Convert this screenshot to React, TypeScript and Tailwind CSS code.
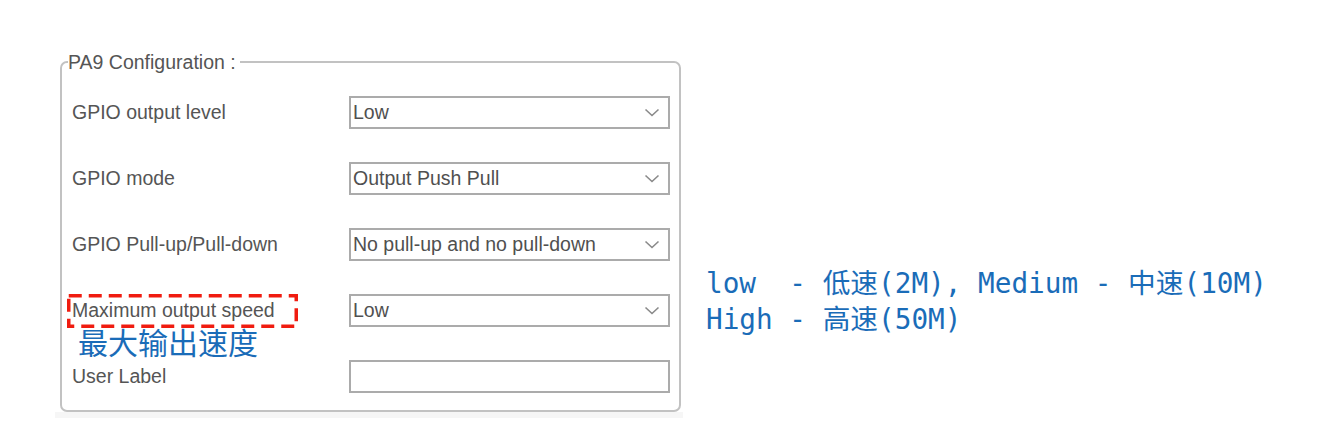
const rows = [
  { label: "GPIO output level", value: "Low" },
  { label: "GPIO mode", value: "Output Push Pull" },
  { label: "GPIO Pull-up/Pull-down", value: "No pull-up and no pull-down" },
  { label: "Maximum output speed", value: "Low" },
  { label: "User Label", value: null },
]

function Chevron() {
  return (
    <svg width="16" height="9" viewBox="0 0 16 9" className="shrink-0">
      <polyline points="1.5,1.5 8,7.5 14.5,1.5" fill="none" stroke="#8a8a8a" strokeWidth="1.6" />
    </svg>
  )
}

function Field({ value }: { value: string | null }) {
  return (
    <div className="w-[321px] h-[33px] border-2 border-[#ababab] bg-white flex items-center justify-between pl-[2px] pr-[8px]">
      <span className="text-[19.5px] text-[#505050] leading-none">{value ?? ""}</span>
      {value !== null && <Chevron />}
    </div>
  )
}

export default function App() {
  return (
    <div
      className="relative w-[1332px] h-[444px] bg-white flex items-start overflow-hidden"
      style={{ fontFamily: '"Liberation Sans", Arial, sans-serif' }}
    >
      <div className="ml-[55px] mt-[51px] flex flex-col">
        <fieldset className="ml-[5px] w-[621px] border-2 border-[#c2c2c2] rounded-[7px] pl-[10px] pr-[9px] pt-[23px] pb-[17px]">
          <legend className="-ml-[4px] pr-[4px] text-[19.5px] leading-[22px] text-[#555555]">
            PA9 Configuration :
          </legend>
          <div className="flex flex-col gap-[33px]">
            {rows.map((r) => (
              <div key={r.label} className="flex items-center justify-between h-[33px]">
                <span className="text-[19.5px] text-[#555555] leading-none">{r.label}</span>
                <Field value={r.value} />
              </div>
            ))}
          </div>
        </fieldset>
        <div className="h-[6px] w-[628px] bg-[#f6f6f6]" />
      </div>

      <div
        className="ml-[23px] mt-[266px] text-[27.7px] leading-[36px] text-[#1a6cb8] whitespace-pre"
        style={{ fontFamily: '"DejaVu Sans Mono", "Noto Sans CJK SC", monospace' }}
      >
        <div>low  - 低速(2M), Medium - 中速(10M)</div>
        <div>High - 高速(50M)</div>
      </div>

      {/* annotation overlays */}
      <svg className="absolute left-[67px] top-[294px]" width="231" height="34" viewBox="0 0 231 34">
        <rect x="1.75" y="1.75" width="227.5" height="30.5" fill="none" stroke="#f01c10" strokeWidth="3.5" strokeDasharray="13 7" />
      </svg>
      <div
        className="absolute left-[78px] top-[326px] text-[30px] leading-none text-[#1a6cb8]"
        style={{ fontFamily: '"Noto Sans CJK SC", sans-serif' }}
      >
        最大输出速度
      </div>
    </div>
  )
}
